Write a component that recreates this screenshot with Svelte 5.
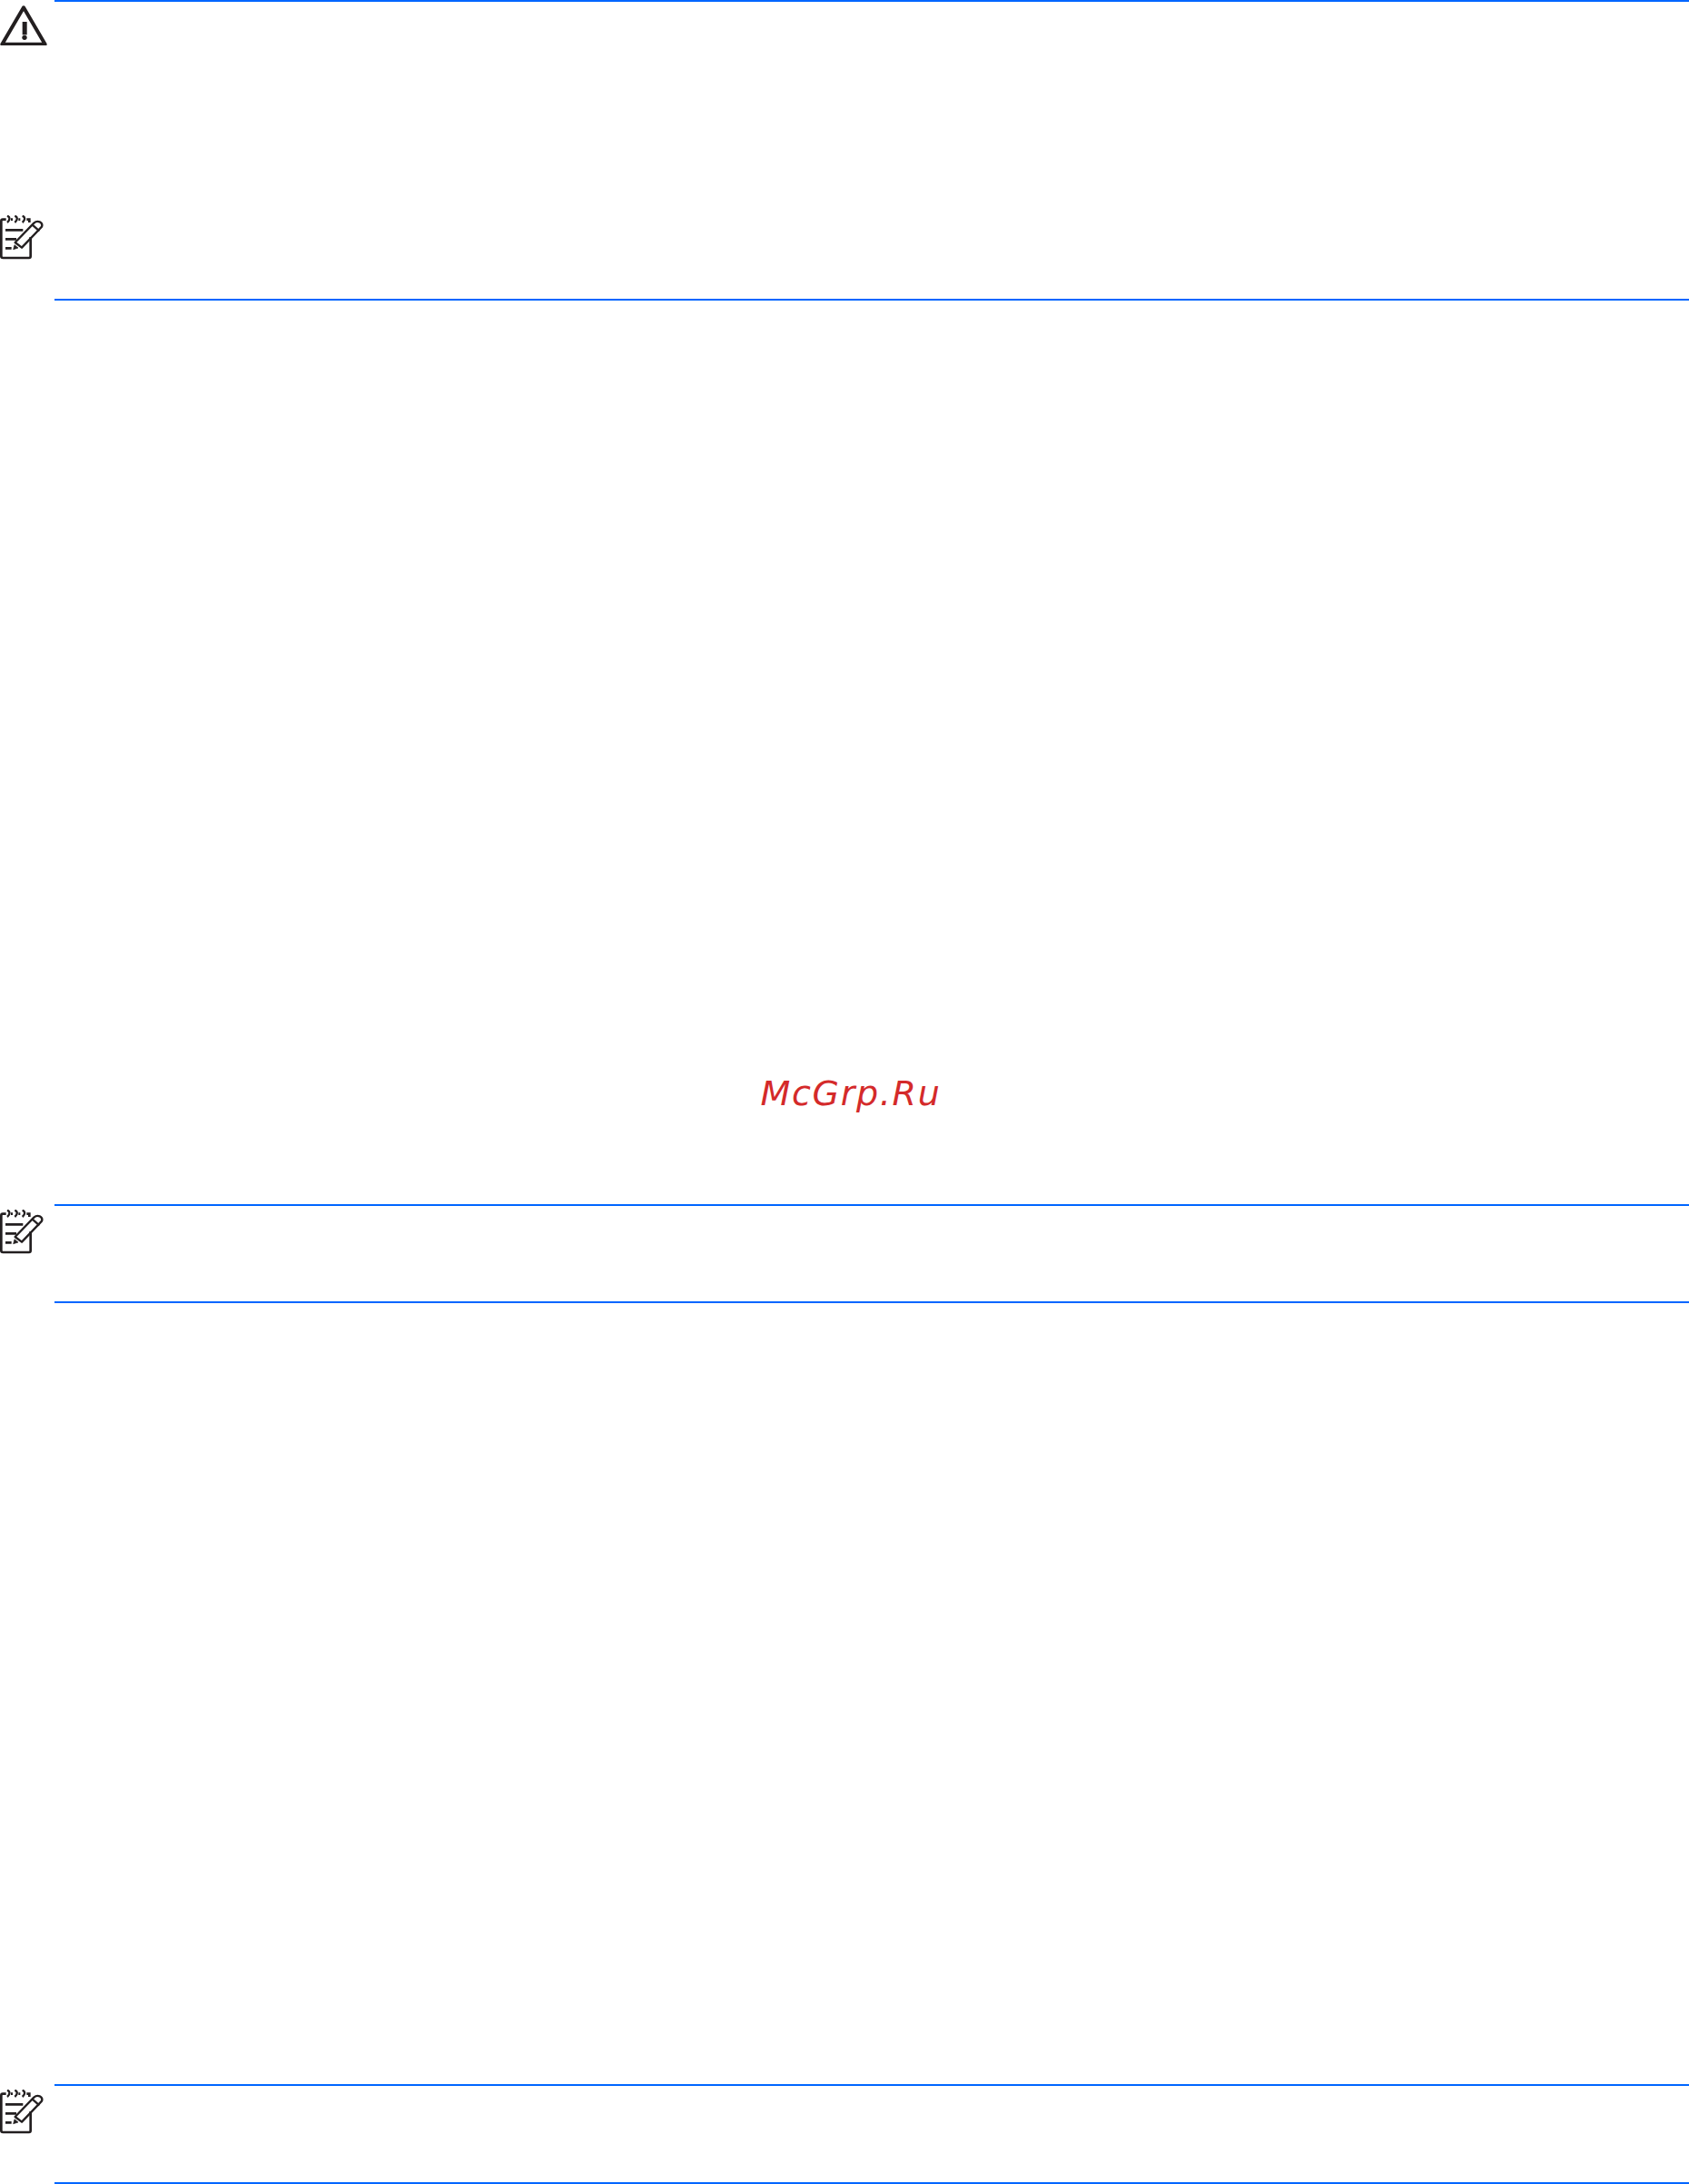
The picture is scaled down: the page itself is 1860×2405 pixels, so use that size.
<script>
  const notes = [
    { height: 109, gap: 995 },
    { height: 110, gap: 860 }
  ];
</script>

{#snippet noteIcon()}
  <svg class="note-icon" viewBox="0 0 144 150" aria-hidden="true">
    <path class="thick" d="M20 14 H9 Q4 14 4 20 V136 Q4 141 10 141 H96 Q101 141 101 136 V72" />
    <path class="curl" d="M24 2 C34 6 34 16 24 24 M49 2 C59 6 59 16 49 24 M74 2 C84 6 84 16 74 24" />
    <path class="thick" d="M36 14 H42 M61 14 H67 M88 14 H97 V24" />
    <path class="thick" d="M18 49 H76 M18 79 H54 M18 109 H38" />
    <path class="thin" d="M50 90 L112 26 Q121 18 131 22 Q142 28 138 38 L72 107 Z" />
    <path class="tip" d="M48 98 L44 113 L60 108 Z" />
    <path class="thin" d="M107 32 L130 52" />
  </svg>
{/snippet}

<main>
  <section class="block first">
    <div class="icons">
      <svg class="warn-icon" viewBox="0 0 156 150" aria-hidden="true">
        <path class="tri" d="M78 25 L7 146 H149 Z" />
        <rect class="mark" x="74" y="72" width="15" height="43" />
        <circle class="mark" cx="81" cy="124" r="8" />
      </svg>
      {@render noteIcon()}
    </div>
    <div class="rule"></div>
  </section>

  {#each notes as n}
    <section class="block" style="height: {n.height}px; margin-top: {n.gap}px">
      <div class="icons">
        {@render noteIcon()}
      </div>
      <div class="rule"></div>
    </section>
  {/each}

  <div class="mark-text">McGrp.Ru</div>
</main>

<style>
  :global(body) {
    margin: 0;
    background: #fff;
  }
  main {
    position: relative;
    width: 1860px;
    height: 2405px;
    overflow: hidden;
  }
  .block {
    display: grid;
    grid-template-columns: 60px 1fr;
    box-sizing: border-box;
  }
  .first {
    height: 331px;
  }
  .rule {
    border-top: 2px solid #0066ff;
    border-bottom: 2px solid #0066ff;
  }
  .icons {
    display: flex;
    flex-direction: column;
    padding-top: 6px;
  }
  .first .icons {
    padding-top: 0;
    gap: 187px;
  }
  .warn-icon {
    display: block;
    width: 52px;
    height: 50px;
  }
  .note-icon {
    display: block;
    width: 48px;
    height: 50px;
  }
  .tri {
    fill: none;
    stroke: #231f20;
    stroke-width: 12;
    stroke-linejoin: round;
  }
  .mark {
    fill: #231f20;
  }
  .thick,
  .thin,
  .curl {
    fill: none;
    stroke: #231f20;
  }
  .thick {
    stroke-width: 8;
  }
  .thin {
    stroke-width: 7;
    stroke-linejoin: round;
  }
  .curl {
    stroke-width: 7;
  }
  .tip {
    fill: #231f20;
    stroke: #231f20;
    stroke-width: 2;
    stroke-linejoin: round;
  }
  .mark-text {
    position: absolute;
    left: 0;
    right: 0;
    top: 1180px;
    padding-left: 14px;
    text-align: center;
    font-family: "DejaVu Sans", sans-serif;
    font-style: italic;
    font-size: 38px;
    line-height: 48px;
    letter-spacing: 1.7px;
    color: #d42a2a;
  }
</style>
